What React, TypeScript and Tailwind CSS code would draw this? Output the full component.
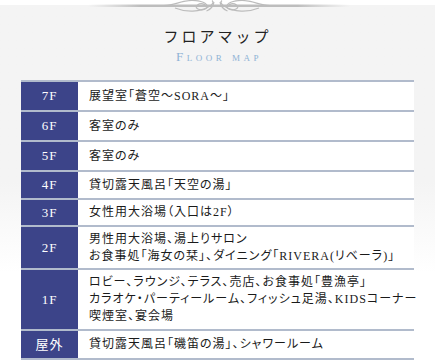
const floors = [
  { label: "7F", h: "h-[30px]", lines: ["展望室「蒼空～SORA～」"] },
  { label: "6F", h: "h-[30px]", lines: ["客室のみ"] },
  { label: "5F", h: "h-[30px]", lines: ["客室のみ"] },
  { label: "4F", h: "h-[28px]", lines: ["貸切露天風呂「天空の湯」"] },
  { label: "3F", h: "h-[27px]", lines: ["女性用大浴場（入口は2F）"] },
  {
    label: "2F",
    h: "h-[43px]",
    lines: ["男性用大浴場、湯上りサロン", "お食事処「海女の栞」、ダイニング「RIVERA(リベーラ)」"],
  },
  {
    label: "1F",
    h: "h-[61px]",
    lines: [
      "ロビー、ラウンジ、テラス、売店、お食事処「豊漁亭」",
      "カラオケ・パーティールーム、フィッシュ足湯、KIDSコーナー",
      "喫煙室、宴会場",
    ],
  },
  { label: "屋外", h: "h-[29px]", lines: ["貸切露天風呂「磯笛の湯」、シャワールーム"] },
];

// Scrollwork rule across the top of the page
function Ornament() {
  return (
    <svg width="435" height="14" viewBox="0 0 435 14" className="block">
      <defs>
        <linearGradient id="rule" x1="0" x2="1" y1="0" y2="0">
          <stop offset="0" stopColor="#c8c8c8" stopOpacity="0" />
          <stop offset="0.2" stopColor="#bdbdbd" />
          <stop offset="0.8" stopColor="#bdbdbd" />
          <stop offset="1" stopColor="#c8c8c8" stopOpacity="0" />
        </linearGradient>
      </defs>
      <rect x="0" y="0" width="435" height="5" fill="#ffffff" />
      <rect x="88" y="4.5" width="262" height="2.5" fill="url(#rule)" />
      <g fill="none" stroke="#bcbcbc" strokeWidth="1.2">
        {/* left scroll */}
        <path d="M164 5.5 C175 5.5 180 0.5 192 0.5 C204 0.5 210 5 206 8.5 C202 11.5 193 8.5 197.5 5 C201 2.5 205 4 206 6.5" />
        <path d="M175 8 C186 12.5 200 12.5 210 6 C213 4 214 2 212 0.5" />
        <path d="M214 2 C213 6.5 211 9.5 206.5 11" />
        {/* right scroll */}
        <path d="M270 5.5 C259 5.5 254 0.5 242 0.5 C230 0.5 224 5 228 8.5 C232 11.5 241 8.5 236.5 5 C233 2.5 229 4 228 6.5" />
        <path d="M259 8 C248 12.5 234 12.5 224 6 C221 4 220 2 222 0.5" />
        <path d="M220 2 C221 6.5 223 9.5 227.5 11" />
      </g>
    </svg>
  );
}

export default function App() {
  return (
    <div className="w-[435px] min-h-[363px] bg-gradient-to-b from-[#f4f4f4] from-50% to-white to-75% font-['Liberation_Serif','Noto_Sans_CJK_JP',serif]">
      <Ornament />

      <div className="mt-[13px] flex flex-col items-center">
        <h2 className="text-[15px] leading-[20px] tracking-[3px] text-[#222]">フロアマップ</h2>
        <p className="mt-[3px] pl-[3px] text-[13px] leading-[14px] tracking-[3.5px] text-[#8fb3d4] [font-variant:small-caps]">
          Floor map
        </p>
      </div>

      <div className="mx-[21px] mt-[16px] border-t-2 border-[#b1bbcc] bg-white">
        {floors.map((f) => (
          <div key={f.label} className={`flex border-b-2 border-[#b1bbcc] ${f.h}`}>
            <div className="w-[57px] shrink-0 flex items-center justify-center bg-[#3c4489] text-white text-[13px] tracking-[1px]">
              {f.label}
            </div>
            <div className="flex flex-col justify-center pl-[11px] text-[12px] leading-[17px] tracking-[1px] text-[#1a1a1a] [font-feature-settings:'palt']">
              {f.lines.map((line) => (
                <span key={line} className="whitespace-nowrap">{line}</span>
              ))}
            </div>
          </div>
        ))}
      </div>
    </div>
  );
}
